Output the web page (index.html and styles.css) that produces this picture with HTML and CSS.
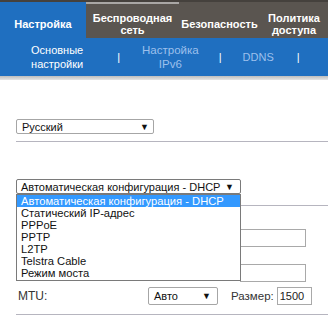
FILE: index.html
```html
<!DOCTYPE html>
<html lang="ru">
<head>
<meta charset="utf-8">
<link rel="stylesheet" href="styles.css">
</head>
<body>
<div class="topnav">
  <div class="tab tab-setup active">Настройка</div>
  <div class="tab tab-wireless hover">Беспроводная<br>сеть</div>
  <div class="tab tab-security">Безопасность</div>
  <div class="tab tab-access">Политика<br>доступа</div>
</div>
<div class="subnav">
  <div class="sub current">Основные<br>настройки</div>
  <div class="sep sep1">|</div>
  <div class="sub sub-ipv6">Настройка<br>IPv6</div>
  <div class="sep sep2">|</div>
  <div class="sub sub-ddns">DDNS</div>
  <div class="sep sep3">|</div>
</div>
<div class="shade"></div>
<div class="content">
  <div class="lang-row">
    <div class="select lang-select"><span>Русский</span><span class="arrow">▼</span></div>
  </div>
  <div class="divider divider-1"></div>
  <div class="conn-row">
    <div class="select conn-select focused"><span class="value">Автоматическая конфигурация - DHCP</span><span class="arrow">▼</span>
      <ul class="options">
        <li class="selected">Автоматическая конфигурация - DHCP</li>
        <li>Статический IP-адрес</li>
        <li>PPPoE</li>
        <li>PPTP</li>
        <li>L2TP</li>
        <li>Telstra Cable</li>
        <li>Режим моста</li>
      </ul>
    </div>
  </div>
  <div class="divider divider-2"></div>
  <div class="field field-1"><span class="label"></span><div class="input"></div></div>
  <div class="field field-2"><span class="label"></span><div class="input"></div></div>
  <div class="field mtu-row">
    <span class="label mtu-label">MTU:</span>
    <div class="select mtu-select"><span>Авто</span><span class="arrow">▼</span></div>
    <span class="size-label">Размер:</span>
    <div class="input size-input">1500</div>
  </div>
  <div class="divider divider-3"></div>
</div>
</body>
</html>
```
FILE: styles.css
```css
* { box-sizing: border-box; }
html, body { margin: 0; padding: 0; background: #fff; }
body {
  font-family: "Liberation Sans", Arial, sans-serif;
  font-size: 12px;
  color: #222;
  width: 328px;
  overflow: hidden;
}
.topnav {
  display: flex;
  height: 38px;
  background: #45413d;
  padding-top: 2px;
}
.tab {
  display: flex;
  align-items: center;
  justify-content: center;
  text-align: center;
  color: #fff;
  font-weight: bold;
  font-size: 11px;
  line-height: 12px;
  background: #5a5550;
  padding-top: 7px;
}
.tab-setup { width: 86px; background: #1f6fc0; }
.tab-wireless { width: 93px; border-top: 2px solid #a9a7a5; padding-top: 5px; }
.tab-security { width: 81px; }
.tab-access { width: 68px; }
.subnav {
  display: flex;
  align-items: center;
  height: 38px;
  background: #1f6fc0;
  padding-left: 31px;
  font-size: 11px;
  line-height: 14px;
}
.sub { text-align: center; color: #9dc0ec; }
.sub.current { color: #fff; }
.sub-ipv6 { font-size: 11.5px; }
.sep { color: #fff; }
.sep1 { margin-left: 34px; }
.sub-ipv6 { margin-left: 22px; }
.sep2 { margin-left: 20px; }
.sub-ddns { margin-left: 21px; }
.sep3 { margin-left: 23px; }
.shade {
  height: 4px;
  background: linear-gradient(#bdbdbd, #e6e6e6);
}
.content { padding-left: 16px; }
.select {
  position: relative;
  display: flex;
  align-items: center;
  justify-content: space-between;
  height: 15px;
  border: 1px solid #a6a6a6;
  border-radius: 2px;
  padding: 0 4px 0 5px;
  font-size: 11px;
  color: #111;
  background: #fff;
  white-space: nowrap;
}
.arrow { font-size: 9px; color: #111; }
.lang-row { padding-top: 39px; }
.lang-select { width: 138px; }
.divider { height: 1px; background: #b6b5bf; }
.divider-1 { margin-top: 7px; }
.conn-row { padding-top: 37px; }
.conn-select { width: 225px; border-color: #7a7a7a; padding-left: 4px; padding-right: 6px; z-index: 2; }
.options {
  position: absolute;
  left: -1px;
  top: 14px;
  width: 225px;
  margin: 0;
  padding: 0 0 1px 0;
  list-style: none;
  background: #fff;
  border: 1px solid #7a7a7a;
  font-size: 11.2px;
  line-height: 12px;
}
.options li { height: 12px; padding-left: 4px; color: #111; white-space: nowrap; }
.options li.selected { background: #3399ff; color: #fff; }
.divider-2 { margin-top: 11px; }
.field { display: flex; align-items: center; height: 18px; }
.field .label { width: 224px; flex: none; }
.field-1 { margin-top: 23px; }
.field-2 { margin-top: 17px; }
.input {
  width: 66px;
  height: 18px;
  border: 1px solid #a9a9a9;
  background: #fff;
  font-size: 11px;
  line-height: 16px;
  padding-left: 2px;
}
.mtu-row { margin-top: 5px; }
.mtu-row .mtu-label { width: 132px; padding-left: 2px; color: #333; font-size: 12px; }
.mtu-select { width: 70px; height: 18px; padding-left: 5px; padding-right: 6px; }
.size-label { margin-left: 13px; color: #333; font-size: 11.5px; }
.size-input { margin-left: 3px; width: 35px; }
.divider-3 { margin-top: 9px; }
```
